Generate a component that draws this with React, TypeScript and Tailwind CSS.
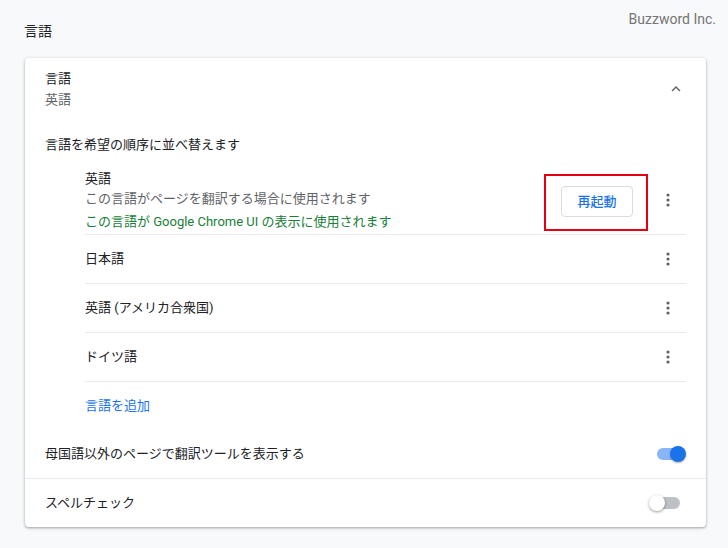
import React from "react";

const font = { fontFamily: 'Roboto, "Noto Sans CJK JP", sans-serif' };

const Kebab: React.FC = () => (
  <div className="w-9 h-9 flex items-center justify-center shrink-0">
    <svg width="4" height="14" viewBox="0 0 4 14">
      <circle cx="2" cy="2" r="1.6" fill="#5f6368" />
      <circle cx="2" cy="7" r="1.6" fill="#5f6368" />
      <circle cx="2" cy="12" r="1.6" fill="#5f6368" />
    </svg>
  </div>
);

const Toggle: React.FC<{ on: boolean }> = ({ on }) => (
  <div className="relative w-[34px] h-4 flex items-center">
    <div
      className={`ml-[5px] w-[26px] h-3 rounded-full ${on ? "bg-[#8ab4f8]" : "bg-[#bdc1c6]"}`}
    />
    <div
      className={`absolute top-0 w-4 h-4 rounded-full ${
        on ? "right-0 bg-[#1a73e8] shadow-[0_1px_2px_rgba(0,0,0,0.3)]" : "left-0 bg-white shadow-[0_1px_3px_rgba(0,0,0,0.4)]"
      }`}
    />
  </div>
);

const languages = ["日本語", "英語 (アメリカ合衆国)", "ドイツ語"];

export default function App() {
  return (
    <div
      className="w-[728px] h-[548px] bg-[#f8f9fa] text-[13px] text-[#202124] pl-[25px] pr-[22px]"
      style={font}
    >
      <div className="flex justify-between">
        <div className="-ml-px pt-[21px] text-[14px] leading-5">言語</div>
        <div className="pt-[9px] -mr-[10px] text-[14px] leading-5 text-[#757575]">Buzzword Inc.</div>
      </div>

      <div className="mt-[17px] bg-white rounded-[4px] shadow-[0_1px_2px_rgba(60,64,67,0.3),0_1px_3px_1px_rgba(60,64,67,0.15)]">
        {/* Header */}
        <div className="h-[62px] flex items-center pl-5 pr-3">
          <div className="flex-1 leading-5">
            <div>言語</div>
            <div className="mt-px text-[#5f6368]">英語</div>
          </div>
          <div className="w-9 h-9 flex items-center justify-center">
            <svg width="18" height="18" viewBox="0 0 24 24">
              <path d="M7.41 15.41L12 10.83l4.59 4.58L18 14l-6-6-6 6z" fill="#5f6368" />
            </svg>
          </div>
        </div>

        <div className="px-5">
          <div className="pt-[15px] pb-[11px] leading-5">言語を希望の順序に並べ替えます</div>

          <div className="ml-10">
            {/* first language */}
            <div className="flex items-center border-b border-[#e8eaed]">
              <div className="flex-1 pt-[3px] pb-[2px] leading-5">
                <div>英語</div>
                <div className="text-[#5f6368]">この言語がページを翻訳する場合に使用されます</div>
                <div className="mt-[3px] text-[#188038]">この言語が Google Chrome UI の表示に使用されます</div>
              </div>
              <div className="mt-[5px] border-2 border-[#e60012] pl-[15px] pr-[13px] pt-[10px] pb-3">
                <button className="w-[72px] h-[31px] border border-[#dadce0] rounded-[4px] text-[#1a73e8] font-medium">
                  再起動
                </button>
              </div>
              <div className="ml-[2px]">
                <Kebab />
              </div>
            </div>

            {languages.map((l) => (
              <div key={l} className="h-[49px] flex items-center border-b border-[#e8eaed]">
                <div className="flex-1">{l}</div>
                <Kebab />
              </div>
            ))}

            <div className="h-[48px] flex items-center text-[#1a73e8]">言語を追加</div>
          </div>

          <div className="h-[48px] flex items-center">
            <div className="flex-1">母国語以外のページで翻訳ツールを表示する</div>
            <Toggle on />
          </div>
        </div>

        <div className="h-[49px] flex items-center px-5 border-t border-[#e8eaed]">
          <div className="flex-1">スペルチェック</div>
          <div className="mr-[3px]">
            <Toggle on={false} />
          </div>
        </div>
      </div>
    </div>
  );
}
